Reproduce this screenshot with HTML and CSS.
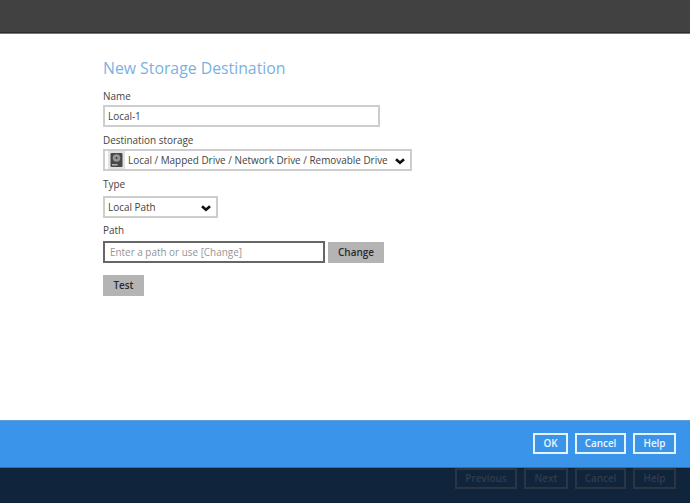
FILE: index.html
```html
<!DOCTYPE html>
<html lang="en">
<head>
    <meta charset="UTF-8">
    <title>New Storage Destination</title>
    <link rel="stylesheet" href="styles.css">
</head>
<body>

    <div class="top-bar"></div>

    <div class="content">
        <h1 class="title">New Storage Destination</h1>

        <div class="label">Name</div>
        <div class="field field-name">Local-1</div>

        <div class="label">Destination storage</div>
        <div class="field field-dest">
            <svg class="drive-icon" width="17" height="18" viewBox="0 0 17 18">
                <rect width="17" height="18" fill="#e2e2e2"/>
                <rect x="2.5" y="2" width="12" height="14" rx="1" fill="#484848"/>
                <circle cx="8.5" cy="7" r="3.8" fill="#979797"/>
                <circle cx="8.5" cy="7" r="1" fill="#3a3a3a"/>
                <rect x="4" y="13" width="5.5" height="1.5" fill="#b5b5b5"/>
            </svg>
            <span class="field-text">Local / Mapped Drive / Network Drive / Removable Drive</span>
            <svg class="chevron" width="10" height="7" viewBox="0 0 10 7"><path d="M1 1.2 L5 4.8 L9 1.2" fill="none" stroke="#111" stroke-width="2.6"/></svg>
        </div>

        <div class="label label-type">Type</div>
        <div class="field field-type">
            <span class="field-text">Local Path</span>
            <svg class="chevron" width="10" height="7" viewBox="0 0 10 7"><path d="M1 1.2 L5 4.8 L9 1.2" fill="none" stroke="#111" stroke-width="2.6"/></svg>
        </div>

        <div class="label label-path">Path</div>
        <div class="path-row">
            <div class="field field-path">Enter a path or use [Change]</div>
            <div class="btn-grey btn-change">Change</div>
        </div>

        <div class="btn-grey btn-test">Test</div>
    </div>

    <div class="blue-bar">
        <div class="btn-outline btn-ok">OK</div>
        <div class="btn-outline btn-cancel">Cancel</div>
        <div class="btn-outline btn-help">Help</div>
    </div>

    <div class="dark-bar">
        <div class="btn-dim btn-prev">Previous</div>
        <div class="btn-dim btn-next">Next</div>
        <div class="btn-dim btn-cancel">Cancel</div>
        <div class="btn-dim btn-help">Help</div>
    </div>

</body>
</html>
```

FILE: styles.css
```css
/* Page frame */
body {
    margin: 0;
    width: 690px;
    height: 503px;
    overflow: hidden;
    background-color: #fff;
    font-family: 'Open Sans', sans-serif;
    font-size: 9.92px;
    color: #444;
    display: flex;
    flex-direction: column;
}

.top-bar {
    height: 32px;
    flex: none;
    margin-bottom: 1px;
    background-color: #414141;
    border-bottom: 1px solid #2c2c2c;
    box-shadow: 0 1px 0 #777;
}

/* Form */
.content {
    flex: 1;
    padding: 0 0 0 103px;
}

.title {
    margin: 22px 0 9px;
    font-size: 15.8px;
    line-height: 24px;
    font-weight: 400;
    color: #7ab2df;
}

.label {
    height: 15px;
    line-height: 15px;
    margin-bottom: 1px;
}

.label-type { margin-bottom: 4px; }
.label-path { margin-bottom: 3px; }

.field {
    box-sizing: border-box;
    height: 22px;
    line-height: 18px;
    border: 2px solid #cdcdcd;
    padding: 0 3px;
    margin-bottom: 6px;
    display: flex;
    align-items: center;
    background-color: #fff;
}

.field-name { width: 277px; }
.field-dest { width: 309px; }
.field-type { width: 115px; margin-bottom: 5px; }

.field-text { flex: 1; white-space: nowrap; }

.drive-icon { flex: none; margin-right: 3px; }

.chevron { flex: none; margin: 2px 2px 0 0; }

.path-row {
    display: flex;
    align-items: center;
    gap: 3px;
    margin-bottom: 12px;
}

.field-path {
    width: 222px;
    margin-bottom: 0;
    border-color: #666;
    padding-left: 5px;
    color: #959595;
}

.btn-grey {
    box-sizing: border-box;
    height: 21px;
    line-height: 21px;
    text-align: center;
    background-color: #b4b4b4;
    font-weight: 600;
    color: #2a2a2a;
}

.btn-change { width: 56px; }
.btn-test { width: 41px; }

/* Bottom bars */
.blue-bar, .dark-bar {
    flex: none;
    display: flex;
    justify-content: flex-end;
    box-sizing: border-box;
    gap: 7px;
    padding-right: 14px;
}

.blue-bar {
    height: 48px;
    padding-top: 12px;
    background-color: #3a94ea;
    border-top: 1px solid #5b9fdc;
    border-bottom: 1px solid #2b6fae;
}

.dark-bar {
    height: 35px;
    background-color: #10243c;
}

.btn-outline, .btn-dim {
    box-sizing: border-box;
    height: 21px;
    line-height: 17px;
    text-align: center;
    font-weight: 600;
}

.btn-outline {
    border: 2px solid #e4f2fc;
    color: #eef6fd;
}

.btn-dim {
    border: 2px solid #2a3644;
    color: #313d4b;
}

.btn-ok { width: 35px; }
.btn-cancel { width: 51px; }
.btn-help { width: 43px; }
.btn-prev { width: 62px; }
.btn-next { width: 44px; }
```
